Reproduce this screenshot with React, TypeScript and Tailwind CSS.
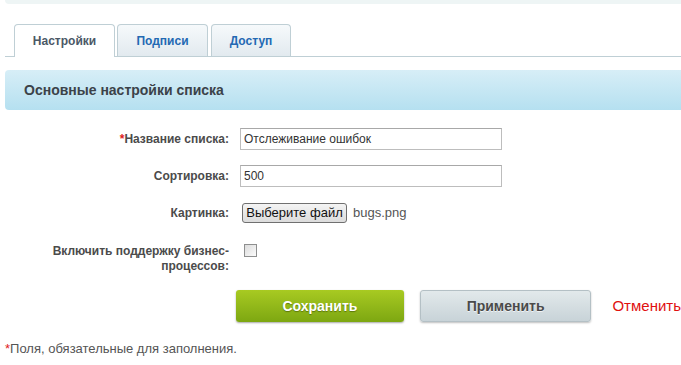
import React from "react";

export default function App() {
  return (
    <div className="w-[681px] h-[365px] bg-white overflow-hidden font-['Liberation_Sans',Arial,sans-serif] text-[12px] text-[#4b4b4b]">
      <div className="h-[4px] ml-[5px] bg-[#eef5f5] rounded-bl-[4px]" />

      <div className="mt-[20px] ml-[5px] pl-[9px] flex items-end h-[33px] border-b border-[#bfcfd5]">
        <div className="relative z-10 -mb-px h-[33px] w-[101px] bg-white border border-b-0 border-[#bfcfd5] rounded-t-[4px] flex items-center justify-center font-bold text-[12px] text-[#4b5866]">
          Настройки
        </div>
        <div className="ml-[2px] h-[32px] w-[91px] bg-linear-to-b from-[#f6f9fb] to-[#e2eaef] border border-b-0 border-[#bfcfd5] rounded-t-[4px] flex items-center justify-center font-bold text-[12px] text-[#2369b3]">
          Подписи
        </div>
        <div className="ml-[3px] h-[32px] w-[80px] bg-linear-to-b from-[#f6f9fb] to-[#e2eaef] border border-b-0 border-[#bfcfd5] rounded-t-[4px] flex items-center justify-center font-bold text-[12px] text-[#2369b3]">
          Доступ
        </div>
      </div>

      <div className="mt-[13px] ml-[5px] h-[40px] rounded-l-[4px] bg-linear-to-b from-[#d7eef7] to-[#b5e0f0] flex items-center pl-[19px] font-bold text-[14px] text-[#3b4249]">
        Основные настройки списка
      </div>

      <div className="mt-[18px]">
        <div className="flex items-center h-[22px]">
          <div className="w-[229px] pl-[50px] text-right font-bold">
            <span className="text-[#e02020]">*</span>Название списка:
          </div>
          <div className="ml-[11px] w-[262px] h-[22px] border border-[#bdbdbd] border-t-[#a8a8a8] bg-white flex items-center pl-[3px] text-[12px] text-[#333]">
            Отслеживание ошибок
          </div>
        </div>

        <div className="mt-[15px] flex items-center h-[22px]">
          <div className="w-[229px] pl-[50px] text-right font-bold">Сортировка:</div>
          <div className="ml-[11px] w-[262px] h-[22px] border border-[#bdbdbd] border-t-[#a8a8a8] bg-white flex items-center pl-[3px] text-[12px] text-[#333]">
            500
          </div>
        </div>

        <div className="mt-[16px] flex items-center h-[20px]">
          <div className="w-[229px] pl-[50px] text-right font-bold">Картинка:</div>
          <div className="ml-[13px] w-[105px] h-[20px] rounded-[3px] border border-[#707070] bg-linear-to-b from-[#f4f4f4] to-[#dcdcdc] flex items-center justify-center text-[13px] text-[#111]">
            Выберите файл
          </div>
          <div className="ml-[6px] text-[13px] text-[#555]">bugs.png</div>
        </div>

        <div className="mt-[20px] flex items-start">
          <div className="w-[229px] pl-[50px] text-right font-bold leading-[15px] pt-[1px]">
            Включить поддержку бизнес-процессов:
          </div>
          <div className="ml-[15px] mt-[1px] w-[13px] h-[13px] border border-[#8e8f8f] bg-linear-to-br from-[#dcdcdc] to-[#fbfbfb]" />
        </div>

        <div className="mt-[16px] flex items-center pl-[236px]">
          <div className="w-[168px] h-[32px] rounded-[3px] bg-linear-to-b from-[#a8ca22] to-[#7da711] shadow-[0_1px_2px_rgba(0,0,0,0.35)] flex items-center justify-center font-bold text-[14px] text-white [text-shadow:0_1px_1px_rgba(60,80,0,0.6)]">
            Сохранить
          </div>
          <div className="ml-[16px] w-[172px] h-[32px] rounded-[3px] border border-[#b4c0c5] bg-linear-to-b from-[#e2e9eb] to-[#c8d3d8] shadow-[0_1px_2px_rgba(0,0,0,0.25)] flex items-center justify-center font-bold text-[14px] text-[#4a4a4a] [text-shadow:0_1px_0_rgba(255,255,255,0.7)]">
            Применить
          </div>
          <div className="ml-[21px] text-[15px] text-[#e01010]">Отменить</div>
        </div>

        <div className="mt-[19px] pl-[5px] leading-[15px] text-[13px] text-[#555]">
          <span className="text-[#e02020]">*</span>Поля, обязательные для заполнения.
        </div>
      </div>
    </div>
  );
}
